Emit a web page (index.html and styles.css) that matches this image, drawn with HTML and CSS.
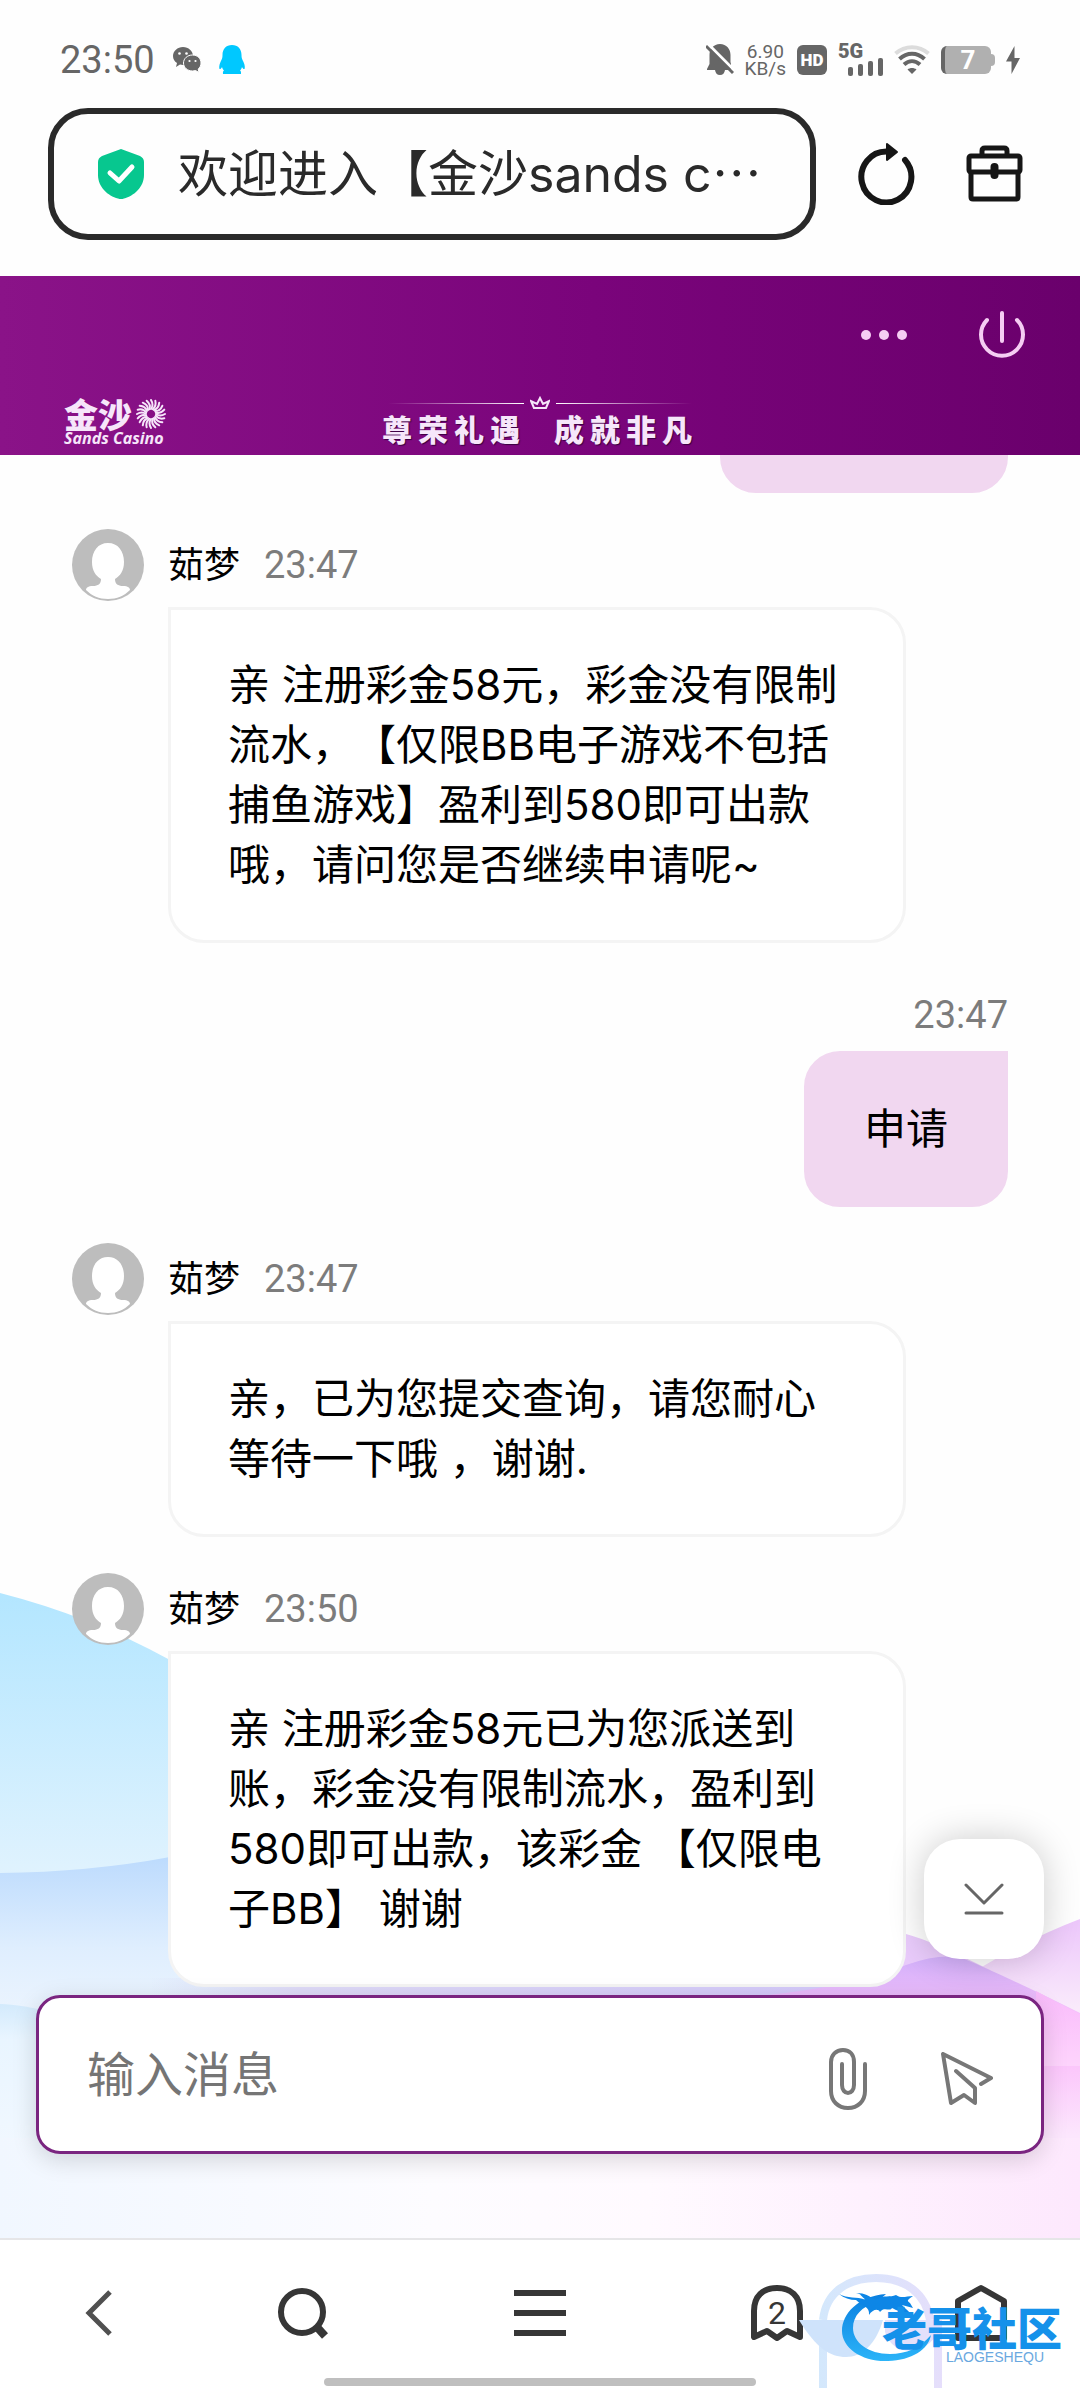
FILE: index.html
```html
<!DOCTYPE html>
<html lang="zh-CN">
<head>
    <meta charset="UTF-8">
    <meta name="viewport" content="width=device-width, initial-scale=1.0">
    <title>欢迎进入【金沙sands casino】</title>
    <link rel="stylesheet" href="styles.css">
</head>
<body>
    <!-- shared avatar -->
    <svg class="defs" aria-hidden="true">
        <symbol id="avatar" viewBox="0 0 72 72">
            <circle cx="36" cy="36" r="36" fill="#bdbdbd"/>
            <path d="M36 14C26 14 20 22 20 33C20 42 24 47 29 50C29 55 26 57 21 57C16 57 14 59 14 61C20 67 27 70 36 70C45 70 52 67 58 61C58 59 56 57 51 57C46 57 43 55 43 50C48 47 52 42 52 33C52 22 46 14 36 14Z" fill="#fff"/>
        </symbol>
    </svg>

    <div class="status-bar">
        <div class="status-left">
            <span class="clock">23:50</span>
            <svg width="28" height="26" viewBox="0 0 28 26">
                <path d="M10 0C4.500 0 0 4 0 9C0 12 1.500 14.500 4 16L3 20L7 17.500C8 17.800 9 18 10 18C15.500 18 20 14 20 9C20 4 15.500 0 10 0Z" fill="#666"/>
                <path d="M19.500 8C14.500 8 10.500 11.500 10.500 16C10.500 20.500 14.500 24 19.500 24C20.500 24 21.500 23.800 22.500 23.500L26 25.500L25.200 22C27 20.600 28 18.500 28 16C28 11.500 24.500 8 19.500 8Z" fill="#666" stroke="#fff" stroke-width="1"/>
                <circle cx="6.500" cy="6.500" r="1.300" fill="#fff"/><circle cx="13.500" cy="6.500" r="1.300" fill="#fff"/>
                <circle cx="16.500" cy="14" r="1.100" fill="#fff"/><circle cx="22.500" cy="14" r="1.100" fill="#fff"/>
            </svg>
            <svg class="qq-icon" width="26" height="30" viewBox="0 0 26 30">
                <path d="M13 0C7 0 3.500 4 3.500 10C3.500 13 3 14 1.500 17C0 20 0 23 .5 24C1.500 24.500 2.500 23 3 22C3.400 23.500 4 24.500 5 25.500C4 26 3.800 27 4 29H22C22.200 27 22 26 21 25.500C22 24.500 22.600 23.500 23 22C23.500 23 24.500 24.500 25.500 24C26 23 26 20 24.500 17C23 14 22.500 13 22.500 10C22.500 4 19 0 13 0Z" fill="#00c8ff"/>
            </svg>
        </div>
        <div class="status-right">
            <svg width="28" height="32" viewBox="0 0 28 32">
                <path d="M14 0C7.500 0 3.500 5 3.500 11V20L1 25V26H9C9.500 29 11 31 14 31C17 31 18.500 29 19 26H25V20L24.500 18V11C24.500 5 20.500 0 14 0Z" fill="#666"/>
                <path d="M2 0L29 27" stroke="#fff" stroke-width="3"/>
                <path d="M0 2L27 29" stroke="#666" stroke-width="3"/>
            </svg>
            <span class="net-speed"><span>6.90</span><span>KB/s</span></span>
            <span class="hd-badge">HD</span>
            <span class="signal">
                <span class="signal-type">5G</span>
                <svg class="signal-bars" width="35" height="18" viewBox="0 0 35 18">
                    <g fill="#666">
                        <rect x="0" y="9" width="5" height="9" rx="2"/>
                        <rect x="10" y="6" width="5" height="12" rx="2"/>
                        <rect x="20" y="3" width="5" height="15" rx="2"/>
                        <rect x="30" y="0" width="5" height="18" rx="2"/>
                    </g>
                </svg>
            </span>
            <svg width="36" height="30" viewBox="0 0 36 30" fill="none">
                <path d="M1.500 8.500C11 0 25 0 34.500 8.500" stroke="#dcdcdc" stroke-width="4"/>
                <path d="M5.500 14C13 7 23 7 30.500 14" stroke="#666" stroke-width="4"/>
                <path d="M10 19.500C15 15 21 15 26 19.500" stroke="#666" stroke-width="4"/>
                <path d="M13.500 24.500C16 22.500 20 22.500 22.500 24.500L18 29Z" fill="#666"/>
            </svg>
            <span class="battery">7</span>
            <svg width="14" height="28" viewBox="0 0 14 28">
                <path d="M8.500 0L0 15.500H5.500V28L14 12H8.500Z" fill="#666"/>
            </svg>
        </div>
    </div>

    <div class="browser-bar">
        <div class="address">
            <svg width="46" height="50" viewBox="0 0 46 50">
                <path d="M23 0L42 7Q46 9 46 13V26C46 38 36 47 26 49.500Q23 50.500 20 49.500C10 47 0 38 0 26V13Q0 9 4 7Z" fill="#07c78f"/>
                <path d="M12 24L21 32L34 18" fill="none" stroke="#fff" stroke-width="5" stroke-linecap="round" stroke-linejoin="round"/>
            </svg>
            <span class="page-title">欢迎进入【金沙sands c⋯</span>
        </div>
        <button class="icon-button" aria-label="刷新">
            <svg width="58" height="62" viewBox="0 0 58 62">
                <path d="M29 8.500A25 25.500 0 1 0 47 17" fill="none" stroke="#161616" stroke-width="6" stroke-linecap="round"/>
                <path d="M29 1L39 9L29 17Z" fill="#161616" stroke="#161616" stroke-width="2" stroke-linejoin="round"/>
            </svg>
        </button>
        <button class="icon-button" aria-label="工具箱">
            <svg width="58" height="58" viewBox="0 0 58 58" fill="none" stroke="#161616" stroke-width="5" stroke-linejoin="round">
                <path d="M16 11V6Q16 3 19 3H38Q41 3 41 6V11"/>
                <rect x="3" y="11" width="51" height="16" rx="2"/>
                <path d="M5 27V52Q5 54 7 54H50Q52 54 52 52V27"/>
                <path d="M28.500 22V30" stroke-width="8" stroke-linecap="round"/>
            </svg>
        </button>
    </div>

    <header class="chat-header">
        <div class="header-actions">
            <button class="icon-button" aria-label="更多">
                <svg width="46" height="12" viewBox="0 0 46 12" fill="#f5cdf3">
                    <circle cx="5" cy="6" r="5"/><circle cx="23" cy="6" r="5"/><circle cx="41" cy="6" r="5"/>
                </svg>
            </button>
            <button class="icon-button" aria-label="关闭">
                <svg width="46" height="48" viewBox="0 0 46 48" fill="none" stroke="#f5cdf3" stroke-width="4" stroke-linecap="round">
                    <path d="M8 9A21 21 0 1 0 38 9"/>
                    <path d="M23 2V30"/>
                </svg>
            </button>
        </div>
        <div class="banner">
            <div class="logo">
                <div class="logo-top">
                    <span>金沙</span>
                    <svg width="30" height="30" viewBox="-15 -15 30 30" fill="none" stroke="#f6e6fa" stroke-width="2" stroke-linecap="round">
                        <g id="rays">
                            <path d="M0 -5Q3 -9 0 -14"/><path d="M0 5Q-3 9 0 14"/>
                            <path d="M5 0Q9 3 14 0"/><path d="M-5 0Q-9 -3 -14 0"/>
                        </g>
                        <use href="#rays" transform="rotate(18)"/>
                        <use href="#rays" transform="rotate(36)"/>
                        <use href="#rays" transform="rotate(54)"/>
                        <use href="#rays" transform="rotate(72)"/>
                    </svg>
                </div>
                <div class="logo-sub">Sands Casino</div>
            </div>
            <div class="slogan">
                <div class="slogan-rule">
                    <span class="rule rule-left"></span>
                    <svg width="20" height="14" viewBox="0 0 20 14" fill="none" stroke="#f6e6fa" stroke-width="2">
                        <path d="M4 12L1 5L7 8L10 2L13 8L19 5L16 12Z"/>
                    </svg>
                    <span class="rule rule-right"></span>
                </div>
                <div class="slogan-text"><span>尊荣礼遇</span><span>成就非凡</span></div>
            </div>
        </div>
    </header>

    <main class="chat">
        <svg class="waves" viewBox="0 0 1080 680" preserveAspectRatio="none" aria-hidden="true">
            <defs>
                <linearGradient id="blue1" x1="0" y1="0" x2="0" y2="1">
                    <stop offset="0" stop-color="#b3e6ff"/><stop offset="1" stop-color="#e2f3fe"/>
                </linearGradient>
                <linearGradient id="blue2" x1="0" y1="0" x2="0" y2="1">
                    <stop offset="0" stop-color="#b9d9fd"/><stop offset=".4" stop-color="#dfeefe"/><stop offset="1" stop-color="#fbfcff"/>
                </linearGradient>
                <linearGradient id="blue3" x1="0" y1="0" x2="0" y2="1">
                    <stop offset="0" stop-color="#d3eafc"/><stop offset=".15" stop-color="#e9f5ff"/><stop offset="1" stop-color="#f7faff"/>
                </linearGradient>
                <linearGradient id="lilac" x1="0" y1="0" x2="0" y2="1">
                    <stop offset="0" stop-color="#d2b0fa"/><stop offset=".2" stop-color="#f5c0fc"/><stop offset="1" stop-color="#ffe9ff"/>
                </linearGradient>
                <linearGradient id="peak" x1="0" y1="0" x2="0" y2="1">
                    <stop offset="0" stop-color="#ecc6fb"/><stop offset=".5" stop-color="#fbeefb"/><stop offset="1" stop-color="#fdf6fc"/>
                </linearGradient>
                <linearGradient id="pink1" x1="0" y1="0" x2="0" y2="1">
                    <stop offset="0" stop-color="#f9bbfb"/><stop offset=".5" stop-color="#fdd0fc"/><stop offset="1" stop-color="#fde4fc"/>
                </linearGradient>
                <linearGradient id="pink2" x1="0" y1="0" x2="0" y2="1">
                    <stop offset="0" stop-color="#fbc6fb"/><stop offset=".4" stop-color="#fce6fd"/><stop offset="1" stop-color="#fceafd"/>
                </linearGradient>
                <linearGradient id="strip" x1="0" y1="0" x2="1" y2="0">
                    <stop offset="0" stop-color="#d9d8f6" stop-opacity="0"/><stop offset=".2" stop-color="#dedaf7"/><stop offset="1" stop-color="#d2c6fa"/>
                </linearGradient>
                <linearGradient id="floor" x1="0" y1="0" x2="1" y2="0">
                    <stop offset="0" stop-color="#f1f7ff"/><stop offset=".4" stop-color="#fdfcff"/><stop offset=".6" stop-color="#fffaff"/><stop offset="1" stop-color="#fde8fd"/>
                </linearGradient>
            </defs>
            <path d="M0 35Q90 58 170 102Q300 180 420 330L0 330Z" fill="url(#blue1)"/>
            <path d="M0 315Q90 314 170 299Q320 270 420 330V540H0Z" fill="url(#blue2)"/>
            <path d="M0 446Q20 446 60 456V680H0Z" fill="url(#blue3)"/>
            <path d="M150 420H906V450H150Z" fill="url(#strip)"/>
            <path d="M980 410Q1030 380 1080 361V560H980Z" fill="url(#peak)"/>
            <path d="M906 376Q930 382 990 412L1010 450H860V420Z" fill="#e9cbfb"/>
            <path d="M740 440Q850 430 906 407Q940 395 962 400Q1010 420 1080 455V680H740Z" fill="url(#lilac)"/>
            <path d="M1036 433Q1060 446 1080 456V560H1036Z" fill="url(#pink1)"/>
            <path d="M1036 508H1080V680H1036Z" fill="url(#pink2)"/>
            <rect x="0" y="580" width="1080" height="100" fill="url(#floor)"/>
        </svg>

        <div class="messages">
            <div class="message mine">
                <div class="bubble previous"></div>
            </div>
            <div class="message">
                <div class="message-head">
                    <svg class="avatar"><use href="#avatar"/></svg>
                    <span class="name">茹梦</span>
                    <time>23:47</time>
                </div>
                <div class="bubble">亲 注册彩金58元，彩金没有限制流水，【仅限BB电子游戏不包括捕鱼游戏】盈利到580即可出款哦，请问您是否继续申请呢~</div>
            </div>
            <div class="message mine">
                <div class="message-head"><time>23:47</time></div>
                <div class="bubble">申请</div>
            </div>
            <div class="message">
                <div class="message-head">
                    <svg class="avatar"><use href="#avatar"/></svg>
                    <span class="name">茹梦</span>
                    <time>23:47</time>
                </div>
                <div class="bubble">亲，已为您提交查询，请您耐心等待一下哦 ，谢谢.</div>
            </div>
            <div class="message">
                <div class="message-head">
                    <svg class="avatar"><use href="#avatar"/></svg>
                    <span class="name">茹梦</span>
                    <time>23:50</time>
                </div>
                <div class="bubble">亲 注册彩金58元已为您派送到账，彩金没有限制流水，盈利到580即可出款，该彩金 【仅限电子BB】 谢谢</div>
            </div>
        </div>

        <form class="composer">
            <input type="text" class="composer-input" placeholder="输入消息" aria-label="输入消息">
            <div class="composer-actions">
                <button type="button" class="icon-button" aria-label="附件">
                    <svg width="38" height="62" viewBox="0 0 38 62" fill="none" stroke="#777" stroke-width="4" stroke-linecap="round">
                        <path d="M36 16V43C36 53 29 60 19 60C9 60 2 53 2 43V14C2 7 7 2 14 2C21 2 25 7 25 14V37C25 42 22 45 19 45C16 45 13 42 13 37V16"/>
                    </svg>
                </button>
                <button type="submit" class="icon-button" aria-label="发送">
                    <svg width="52" height="54" viewBox="0 0 52 54" fill="none" stroke="#777" stroke-width="4" stroke-linecap="round" stroke-linejoin="round">
                        <path d="M40 32L50 26L2 2L10 51L23 43L34 51V36L15 19"/>
                    </svg>
                </button>
            </div>
            <button type="button" class="to-bottom" aria-label="滚动到底部">
                <svg width="40" height="34" viewBox="0 0 40 34" fill="none" stroke="#666" stroke-width="3" stroke-linecap="round" stroke-linejoin="round">
                    <path d="M2 3L20 21L38 3M2 31H38"/>
                </svg>
            </button>
        </form>
    </main>

    <nav class="bottom-nav">
        <div class="nav-items">
            <button class="icon-button" aria-label="返回">
                <svg width="28" height="46" viewBox="0 0 28 46"><path d="M25 2L4 23L25 44" fill="none" stroke="#505050" stroke-width="5"/></svg>
            </button>
            <button class="icon-button" aria-label="搜索">
                <svg width="52" height="52" viewBox="0 0 52 52" fill="none" stroke="#363636">
                    <circle cx="25" cy="25" r="21" stroke-width="6"/><path d="M39 39L48 49" stroke-width="8"/>
                </svg>
            </button>
            <button class="icon-button" aria-label="菜单">
                <svg width="52" height="46" viewBox="0 0 52 46"><path d="M0 3H52M0 23H52M0 43H52" stroke="#363636" stroke-width="6"/></svg>
            </button>
            <button class="icon-button tabs" aria-label="标签页">
                <svg width="52" height="56" viewBox="0 0 52 56">
                    <path d="M3 52V26C3 11 12 3 26 3C40 3 49 11 49 26V52L36 46L26 53L16 46Z" fill="none" stroke="#363636" stroke-width="6" stroke-linejoin="round"/>
                </svg>
                <span class="tab-count">2</span>
            </button>
            <button class="icon-button" aria-label="主页">
                <svg width="54" height="58" viewBox="0 0 54 58"><path d="M4 54V17L27 4L50 17V54Z" fill="none" stroke="#363636" stroke-width="6" stroke-linejoin="round"/></svg>
            </button>
        </div>
        <div class="home-indicator"></div>

        <div class="watermark">
            <svg width="284" height="116" viewBox="0 0 284 116">
                <defs>
                    <linearGradient id="brand" x1="0" y1="0" x2="0" y2="1">
                        <stop offset="0" stop-color="#0a7fe0"/><stop offset="1" stop-color="#2cb4f8"/>
                    </linearGradient>
                    <linearGradient id="ghost" gradientUnits="userSpaceOnUse" x1="20" y1="0" x2="150" y2="0">
                        <stop offset="0" stop-color="#d3e8fc"/><stop offset="1" stop-color="#e6defb"/>
                    </linearGradient>
                </defs>
                <path d="M27 48C30 20 52 6 80 6C110 6 130 22 134 48M27 72V116M142 48V116" fill="none" stroke="url(#ghost)" stroke-width="8"/>
                <path d="M3 48H87C80 72 66 85 50 85C34 85 20 76 3 48Z" fill="#cfe3fb"/>
                <path d="M89 48H142V60C132 82 98 88 89 60Z" fill="#e4e0fb"/>
                <path d="M90 22C62 24 46 42 46 59C46 76 66 90 92 89C116 88 132 78 135 63C124 76 110 82 94 82C72 82 57 70 57 56C57 44 66 34 80 31Z" fill="url(#brand)"/>
                <path d="M43 22C52 27 60 24 70 28C64 24 66 22 60 21C70 21 72 24 80 28C88 22 94 26 100 23C106 27 110 24 117 24C112 28 110 28 114 31L117 36L106 33C108 36 112 38 114 41C106 41 100 38 96 36C94 40 88 34 84 40C82 36 76 38 73 43C74 34 66 34 60 28C54 28 48 26 43 22Z" fill="#0d86e6"/>
            </svg>
            <div class="brand">
                <span class="brand-name">老哥社区</span>
                <span class="brand-latin">LAOGESHEQU</span>
            </div>
        </div>
    </nav>
</body>
</html>
```

FILE: styles.css
```css
* {
    margin: 0;
    padding: 0;
    box-sizing: border-box;
}
body {
    height: 100vh;
    display: flex;
    flex-direction: column;
    overflow: hidden;
    background-color: #fefefe;
    color: #000;
    font-family: Inter, "Noto Sans CJK SC", sans-serif;
    text-spacing-trim: space-all;
}
svg {
    display: block;
    flex-shrink: 0;
}
button {
    border: none;
    background: none;
    cursor: pointer;
    font-family: inherit;
}
.defs {
    position: absolute;
    width: 0;
    height: 0;
}
.icon-button {
    display: flex;
    align-items: center;
    justify-content: center;
}

/* phone status bar */
.status-bar {
    display: flex;
    justify-content: space-between;
    align-items: center;
    height: 108px;
    padding: 12px 60px 0;
    color: #666;
    font-family: Roboto, sans-serif;
}
.status-left,
.status-right {
    display: flex;
    align-items: center;
    gap: 11px;
}
.status-left {
    gap: 18px;
}
.clock {
    font-size: 38px;
    line-height: 40px;
}
.net-speed {
    display: flex;
    flex-direction: column;
    align-items: center;
    font-size: 19px;
    line-height: 17px;
}
.hd-badge {
    width: 30px;
    border-radius: 6px;
    background-color: #666;
    color: #fff;
    font-size: 17px;
    font-weight: 900;
    line-height: 30px;
    text-align: center;
}
.signal {
    display: flex;
    flex-direction: column;
    width: 45px;
    font-size: 20px;
    font-weight: 900;
    line-height: 14px;
}
.signal-bars {
    align-self: flex-end;
}
.battery {
    position: relative;
    width: 50px;
    margin-right: 4px;
    border-left: 4px solid #666;
    border-radius: 6px;
    background-color: #b0b0b0;
    color: #fff;
    font-size: 26px;
    font-weight: 700;
    line-height: 28px;
    text-align: center;
}
.battery::after {
    content: "";
    position: absolute;
    right: -4px;
    top: 8px;
    width: 4px;
    height: 12px;
    border-radius: 0 4px 4px 0;
    background-color: #b0b0b0;
}

/* browser address bar */
.browser-bar {
    display: flex;
    align-items: center;
    gap: 50px;
    padding: 0 56px 36px 48px;
}
.address {
    flex: 1;
    display: flex;
    align-items: center;
    gap: 34px;
    height: 132px;
    margin-right: -8px;
    padding: 0 44px;
    border: 6px solid #2a2a2a;
    border-radius: 40px;
    overflow: hidden;
    white-space: nowrap;
}
.page-title {
    color: #2a2a2a;
    font-size: 50px;
    line-height: 72px;
}

/* purple header */
.chat-header {
    background: linear-gradient(to right, #8a1388, #7a047b 55%, #6a006c);
}
.header-actions {
    display: flex;
    justify-content: flex-end;
    align-items: center;
    gap: 72px;
    height: 118px;
    padding-right: 55px;
}
.banner {
    display: grid;
    grid-template-columns: 1fr auto 1fr;
    align-items: end;
    height: 61px;
    padding: 0 64px 9px;
    color: #f6e6fa;
}
.logo-top {
    display: flex;
    align-items: center;
    gap: 4px;
    font-family: "Noto Sans CJK SC", sans-serif;
    font-size: 34px;
    font-weight: 900;
    line-height: 32px;
}
.logo-sub {
    font-family: "Open Sans", sans-serif;
    font-size: 16px;
    font-style: italic;
    font-weight: 700;
    line-height: 16px;
}
.slogan-rule {
    display: flex;
    align-items: center;
    justify-content: center;
    gap: 6px;
}
.rule {
    width: 136px;
    height: 1px;
}
.rule-left {
    background: linear-gradient(to right, transparent, #fff);
}
.rule-right {
    background: linear-gradient(to left, transparent, #fff);
}
.slogan-text {
    display: flex;
    justify-content: center;
    gap: 28px;
    font-family: "Noto Sans CJK SC", sans-serif;
    font-size: 30px;
    font-weight: 900;
    letter-spacing: 6px;
    line-height: 36px;
    text-shadow: 1px 1px 1px #3a0040;
}

/* conversation */
.chat {
    flex: 1;
    min-height: 0;
    position: relative;
    display: flex;
    flex-direction: column;
    padding-bottom: 84px;
}
.waves {
    position: absolute;
    left: 0;
    bottom: 0;
    width: 100%;
    height: 680px;
}
.messages {
    flex: 1;
    min-height: 0;
    position: relative;
    display: flex;
    flex-direction: column;
    justify-content: flex-end;
    gap: 36px;
    padding: 0 72px 8px;
    overflow: hidden;
}
.message {
    display: flex;
    flex-direction: column;
    align-items: flex-start;
    gap: 6px;
}
.message-head {
    display: flex;
    align-items: center;
    gap: 24px;
    height: 72px;
}
.avatar {
    width: 72px;
    height: 72px;
}
.name {
    font-size: 36px;
    line-height: 48px;
}
time {
    color: #7c7c7c;
    font-family: Roboto, sans-serif;
    font-size: 38px;
}
.bubble {
    max-width: 738px;
    margin-left: 96px;
    padding: 45px 57px;
    border: 3px solid #f4f4f4;
    border-radius: 0 36px 36px 36px;
    background-color: #fff;
    font-size: 42px;
    line-height: 60px;
}
.mine {
    align-items: flex-end;
    gap: 0;
}
.mine .bubble {
    margin-left: 0;
    border-color: #f1d7f0;
    border-radius: 36px 0 36px 36px;
    background-color: #f1d7f0;
}
.previous {
    width: 288px;
}

/* message box */
.composer {
    position: relative;
    display: flex;
    align-items: center;
    gap: 24px;
    height: 159px;
    margin: 0 36px;
    padding: 0 48px;
    border: 3px solid #7a2580;
    border-radius: 24px;
    background-color: #fff;
    box-shadow: 0 6px 24px rgba(0, 0, 0, 0.15);
}
.composer-input {
    flex: 1;
    min-width: 0;
    border: none;
    outline: none;
    background: none;
    font-family: inherit;
    font-size: 48px;
    line-height: 72px;
}
.composer-input::placeholder {
    color: #757575;
}
.composer-actions {
    display: flex;
    align-items: center;
    gap: 74px;
    padding-top: 8px;
}
.to-bottom {
    position: absolute;
    right: -3px;
    bottom: 192px;
    display: flex;
    align-items: center;
    justify-content: center;
    width: 120px;
    height: 120px;
    border-radius: 36px;
    background-color: #fff;
    box-shadow: 0 0 36px rgba(0, 0, 0, 0.2);
}

/* bottom navigation */
.bottom-nav {
    position: relative;
    height: 150px;
    border-top: 2px solid #e6e6e8;
    background-color: #fff;
}
.nav-items {
    display: grid;
    grid-template-columns: 33fr 35fr 44fr 35fr 33fr;
    height: 146px;
}
.tabs {
    position: relative;
}
.tab-count {
    position: absolute;
    color: #363636;
    font-family: Roboto, sans-serif;
    font-size: 32px;
}
.home-indicator {
    position: absolute;
    left: 30%;
    right: 30%;
    bottom: 2px;
    height: 8px;
    border-radius: 4px;
    background-color: #bfbfbf;
}
.watermark {
    position: absolute;
    right: 0;
    bottom: 0;
    pointer-events: none;
}
.brand {
    position: absolute;
    right: 18px;
    top: 32px;
    display: flex;
    flex-direction: column;
}
.brand-name {
    color: #1591ea;
    font-family: "Noto Sans CJK SC", sans-serif;
    font-size: 45px;
    font-weight: 900;
    line-height: 46px;
    white-space: nowrap;
}
.brand-latin {
    align-self: flex-end;
    padding-right: 18px;
    color: #6aa8e0;
    font-family: "Liberation Sans", sans-serif;
    font-size: 14px;
    line-height: 14px;
}
```
